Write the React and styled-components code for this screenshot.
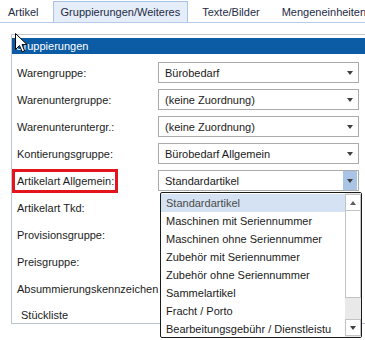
import React from "react";
import styled, { createGlobalStyle } from "styled-components";

const GlobalStyle = createGlobalStyle`
  html, body { margin: 0; padding: 0; background: #ffffff; }
  body { font-family: "Liberation Sans", Arial, sans-serif; font-size: 11px; color: #1c1c1c; }
`;

const Page = styled.div`
  position: relative;
  width: 365px;
  height: 340px;
  overflow: hidden;
  background: #ffffff;
`;

const TabStrip = styled.div`
  display: flex;
  align-items: flex-end;
  height: 22px;
  border-bottom: 1px solid #b5cbe6;
  white-space: nowrap;
`;

const Tab = styled.div`
  display: flex;
  align-items: center;
  height: 20px;
  padding: 0 ${(p) => (p.$active ? "7px" : "10px")};
  margin: 0 ${(p) => (p.$active ? "3px" : "0")};
  margin-left: ${(p) => (p.$first ? "-3px" : p.$active ? "3px" : "0")};
  background: ${(p) => (p.$active ? "#e4edf8" : "transparent")};
  border: 1px solid ${(p) => (p.$active ? "#a9c4e4" : "transparent")};
  border-bottom: none;
  color: #1e2b45;
  font-size: 11px;
  flex-shrink: 0;
`;

const Panel = styled.div`
  margin: 11px 0 0 11px;
  width: 400px;
  height: 288px;
  border-top: 1px solid #c9c9c9;
  border-left: 1px solid #bcc6d2;
  border-bottom: 1px solid #bcc6d2;
  display: flex;
  flex-direction: column;
`;

const Header = styled.div`
  margin-top: 3px;
  height: 16px;
  flex-shrink: 0;
  background: #0b5ba5;
  color: #ffffff;
  display: flex;
  align-items: center;
  padding-left: 3px;
`;

const Form = styled.div`
  display: grid;
  grid-template-columns: 146px 201px;
  grid-auto-rows: 27px;
  padding-top: 5px;
`;

const Label = styled.div`
  display: flex;
  align-items: center;
  padding-left: 5px;
  white-space: nowrap;
  color: #1c1c1c;
`;

const Marked = styled.div`
  align-self: center;
  justify-self: start;
  height: 18px;
  display: flex;
  align-items: center;
  padding: 0 1px 0 2px;
  border: 3px solid #e4141d;
  white-space: nowrap;
  color: #1c1c1c;
`;

const LastLabel = styled.div`
  grid-column: 1 / span 2;
  height: 21px;
  display: flex;
  align-items: flex-end;
  padding: 0 0 2px 9px;
  box-sizing: border-box;
`;

const ComboCell = styled.div`
  position: relative;
  display: flex;
  align-items: center;
`;

const Combo = styled.div`
  width: 100%;
  height: 21px;
  box-sizing: border-box;
  border: 1px solid #ababab;
  background: #ffffff;
  display: flex;
  align-items: stretch;
`;

const ComboText = styled.div`
  flex: 1;
  display: flex;
  align-items: center;
  padding-left: 6px;
  color: #1a1a1a;
  white-space: nowrap;
  overflow: hidden;
`;

const ComboButton = styled.div`
  width: 14px;
  margin-right: 1px;
  display: flex;
  align-items: center;
  justify-content: center;
  background: ${(p) => (p.$open ? "#a9c4e4" : "transparent")};
`;

const Arrow = styled.span`
  width: 0;
  height: 0;
  border-left: 3px solid transparent;
  border-right: 3px solid transparent;
  ${(p) =>
    p.$up
      ? "border-bottom: 4px solid #5f5f5f;"
      : "border-top: 4px solid #404040;"}
`;

const DropList = styled.div`
  position: absolute;
  top: calc(100% - 2px);
  left: 2px;
  width: 202px;
  height: 146px;
  box-sizing: border-box;
  border: 1px solid #1b1b1b;
  border-radius: 2px;
  background: #ffffff;
  display: flex;
  z-index: 5;
`;

const Items = styled.div`
  flex: 1;
  display: flex;
  flex-direction: column;
  padding-top: 1px;
  overflow: hidden;
`;

const Item = styled.div`
  height: 18px;
  flex-shrink: 0;
  display: flex;
  align-items: center;
  padding-left: 5px;
  white-space: nowrap;
  background: ${(p) => (p.$selected ? "#d5e2f3" : "transparent")};
  color: ${(p) => (p.$selected ? "#4a4a4a" : "#1a1a1a")};
`;

const ScrollBar = styled.div`
  width: 16px;
  display: flex;
  flex-direction: column;
  padding: 1px 0;
  background: #e9e9e9;
`;

const ScrollButton = styled.div`
  height: 17px;
  box-sizing: border-box;
  border: 1px solid #c3c3c3;
  background: #ffffff;
  display: flex;
  align-items: center;
  justify-content: center;
  flex-shrink: 0;
`;

const Thumb = styled.div`
  height: 87px;
  box-sizing: border-box;
  border: 1px solid #c3c3c3;
  border-top: none;
  background: #ffffff;
  flex-shrink: 0;
`;

const Track = styled.div`
  flex: 1;
`;

const Cursor = styled.svg`
  position: absolute;
  left: 15px;
  top: 33px;
  z-index: 10;
`;

const combos = [
  ["Warengruppe:", "Bürobedarf"],
  ["Warenuntergruppe:", "(keine Zuordnung)"],
  ["Warenunteruntergr.:", "(keine Zuordnung)"],
  ["Kontierungsgruppe:", "Bürobedarf Allgemein"],
];

const listItems = [
  "Standardartikel",
  "Maschinen mit Seriennummer",
  "Maschinen ohne Seriennummer",
  "Zubehör mit Seriennummer",
  "Zubehör ohne Seriennummer",
  "Sammelartikel",
  "Fracht / Porto",
  "Bearbeitungsgebühr / Dienstleistu",
];

const plainLabels = [
  "Artikelart Tkd:",
  "Provisionsgruppe:",
  "Preisgruppe:",
  "Absummierungskennzeichen",
];

export default function App() {
  return (
    <>
      <GlobalStyle />
      <Page>
        <TabStrip>
          <Tab $first>Artikel</Tab>
          <Tab $active>Gruppierungen/Weiteres</Tab>
          <Tab>Texte/Bilder</Tab>
          <Tab>Mengeneinheiten/</Tab>
        </TabStrip>
        <Panel>
          <Header>Gruppierungen</Header>
          <Form>
            {combos.map(([label, value]) => (
              <React.Fragment key={label}>
                <Label>{label}</Label>
                <ComboCell>
                  <Combo>
                    <ComboText>{value}</ComboText>
                    <ComboButton>
                      <Arrow />
                    </ComboButton>
                  </Combo>
                </ComboCell>
              </React.Fragment>
            ))}
            <Marked>Artikelart Allgemein:</Marked>
            <ComboCell>
              <Combo>
                <ComboText>Standardartikel</ComboText>
                <ComboButton $open>
                  <Arrow />
                </ComboButton>
              </Combo>
              <DropList>
                <Items>
                  {listItems.map((it, i) => (
                    <Item key={it} $selected={i === 0}>
                      {it}
                    </Item>
                  ))}
                </Items>
                <ScrollBar>
                  <ScrollButton>
                    <Arrow $up />
                  </ScrollButton>
                  <Thumb />
                  <Track />
                  <ScrollButton>
                    <Arrow />
                  </ScrollButton>
                </ScrollBar>
              </DropList>
            </ComboCell>
            {plainLabels.map((l) => (
              <React.Fragment key={l}>
                <Label>{l}</Label>
                <div />
              </React.Fragment>
            ))}
            <LastLabel>Stückliste</LastLabel>
          </Form>
        </Panel>
        <Cursor width="13" height="21" viewBox="0 0 13 21">
          <path
            d="M0.5 0.5 L0.5 16.5 L4.5 12.5 L7.2 18.8 L9.6 17.8 L7 11.6 L12 11.6 Z"
            fill="#ffffff"
            stroke="#000000"
            strokeWidth="1"
            strokeLinejoin="miter"
          />
        </Cursor>
      </Page>
    </>
  );
}
